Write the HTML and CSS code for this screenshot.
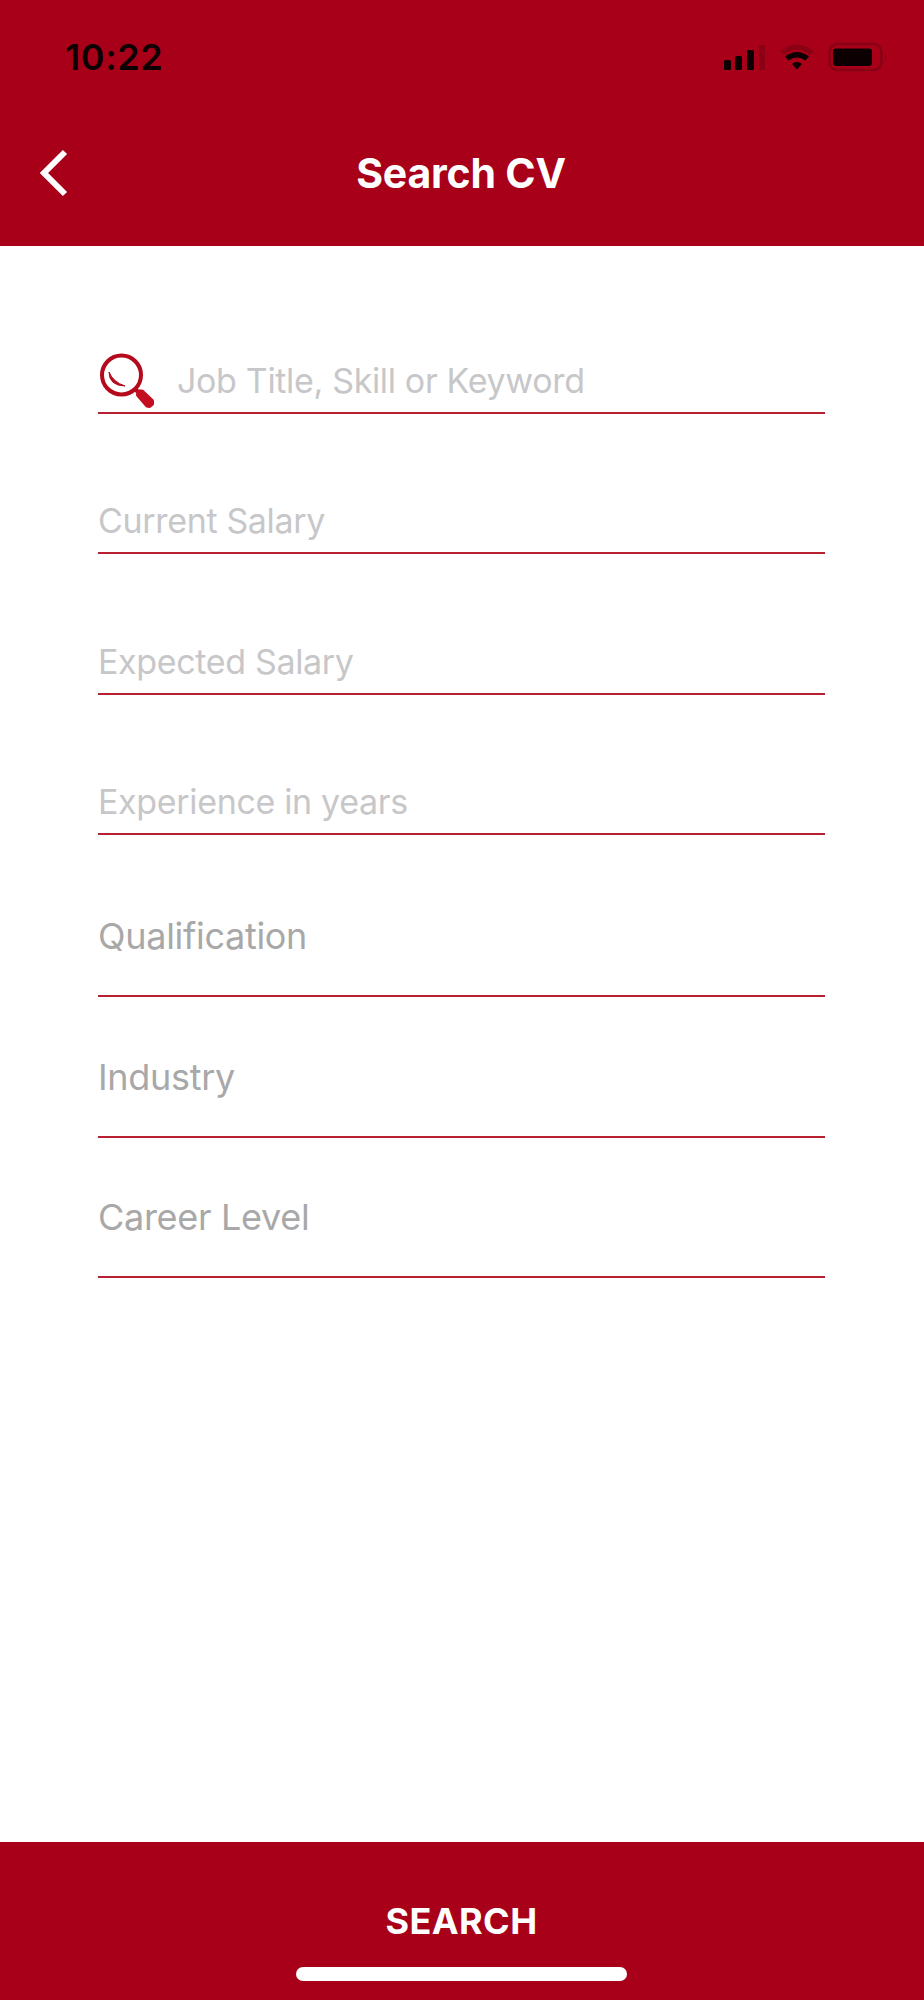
FILE: index.html
```html
<!DOCTYPE html>
<html lang="en">
<head>
    <meta charset="utf-8" />
    <title>Search CV</title>
    <link rel="stylesheet" href="styles.css">
</head>
<body>
    <header class="header">
        <div class="status-bar">
            <span class="time">10:22</span>
            <svg class="status-icons" width="170" height="36" viewBox="0 0 170 36">
                <!-- signal -->
                <rect x="4" y="20" width="7" height="10" rx="1.5" />
                <rect x="15" y="16" width="7" height="14" rx="1.5" />
                <rect x="27" y="10" width="7" height="20" rx="1.5" />
                <rect class="dim" x="39" y="5" width="6" height="25" rx="1.5" />
                <!-- wifi -->
                <path class="dim" d="M60 11 Q77 -2 94 11 L90 15 Q77 5 64 15 Z" />
                <path d="M65 16.500 Q77 7.500 89 16.500 L85.500 20.500 Q77 14.500 68.500 20.500 Z" />
                <path d="M72 24 Q77 20 82 24 L77 29.500 Z" />
                <!-- battery -->
                <rect class="battery" x="109.500" y="4" width="52" height="26" rx="8" />
                <rect x="113" y="8.500" width="39" height="17.500" rx="3" />
                <path class="dim" d="M165 12.500 Q168.500 17 165 21.500 Z" />
            </svg>
        </div>
        <div class="nav-bar">
            <svg class="back" width="32" height="50" viewBox="0 0 32 50">
                <path d="M26 4 L5 25 L26 46" />
            </svg>
            <h1>Search CV</h1>
        </div>
    </header>

    <main class="form">
        <div class="field">
            <svg class="search-icon" width="58" height="58" viewBox="0 0 58 58">
                <circle cx="23.500" cy="23" r="19.500" />
                <path class="shine" d="M11 20 Q11 33.500 27 34 Q15 30 11 20 Z" />
                <path class="neck" d="M36 36 L41 41" />
                <path class="handle" d="M40 43 L40.500 39.500 L44 39.500 L54 49 L54 52 L51.500 54 L49 53.500 Z" />
            </svg>
            <span>Job Title, Skill or Keyword</span>
        </div>
        <div class="field"><span>Current Salary</span></div>
        <div class="field"><span>Expected Salary</span></div>
        <div class="field"><span>Experience in years</span></div>
        <div class="selects">
            <div class="field select"><span>Qualification</span></div>
            <div class="field select"><span>Industry</span></div>
            <div class="field select"><span>Career Level</span></div>
        </div>
    </main>

    <footer class="footer">
        <span class="search-button">SEARCH</span>
        <div class="home-indicator"></div>
    </footer>
</body>
</html>
```

FILE: styles.css
```css
* {
    box-sizing: border-box;
}

body {
    font-family: Inter, "Liberation Sans", sans-serif;
    margin: 0;
    background-color: #fff;
    display: flex;
    flex-direction: column;
    height: 2000px;
}

.header {
    background-color: #a90019;
    height: 246px;
}

.status-bar {
    display: flex;
    justify-content: space-between;
    padding: 36px 34px 0 65px;
    height: 106px;
}

.time {
    font-size: 36px;
    line-height: 42px;
    font-weight: 600;
    letter-spacing: 0.6px;
    color: #0c0002;
}

.status-icons {
    margin-top: 4px;
    fill: #0c0002;
}

.status-icons .dim {
    fill: #8c0015;
}

.status-icons .battery {
    fill: none;
    stroke: #870014;
    stroke-width: 2.5;
}

.nav-bar {
    display: grid;
    grid-template-columns: 120px 1fr 122px;
    align-items: center;
    height: 134px;
}

.back {
    margin-left: 39px;
    fill: none;
    stroke: #fff;
    stroke-width: 6;
}

h1 {
    margin: 0;
    text-align: center;
    font-size: 41px;
    line-height: 48px;
    font-weight: 700;
    letter-spacing: -0.2px;
    color: #fff;
}

.form {
    flex: 1;
    padding: 27px 99px 0 98px;
}

.field {
    display: flex;
    align-items: flex-end;
    height: 140.5px;
    padding-bottom: 11px;
    border-bottom: 2px solid #b81f31;
    font-size: 34px;
    line-height: 40px;
    letter-spacing: -0.34px;
    color: #c7c7c9;
    white-space: nowrap;
}

.search-icon {
    flex: none;
    margin: 0 21px -9px 0;
    fill: none;
    stroke: #b5091c;
    stroke-width: 4;
}

.search-icon .shine {
    fill: #b5091c;
    stroke-width: 1;
}

.search-icon .handle {
    fill: #c40e20;
    stroke: #c40e20;
    stroke-width: 4;
    stroke-linejoin: round;
}

.selects {
    padding-top: 21.5px;
}

.select {
    padding-bottom: 38px;
    font-size: 36px;
    line-height: 42px;
    letter-spacing: -0.3px;
    color: #a8a8a8;
}

.footer {
    background-color: #a90019;
    height: 158px;
    padding: 58px 1px 0 0;
    display: flex;
    flex-direction: column;
    align-items: center;
    gap: 25px;
}

.search-button {
    font-size: 36px;
    line-height: 42px;
    font-weight: 700;
    letter-spacing: 0.4px;
    color: #fff;
}

.home-indicator {
    width: 331px;
    height: 14px;
    border-radius: 7px;
    background-color: #fff;
}
```
